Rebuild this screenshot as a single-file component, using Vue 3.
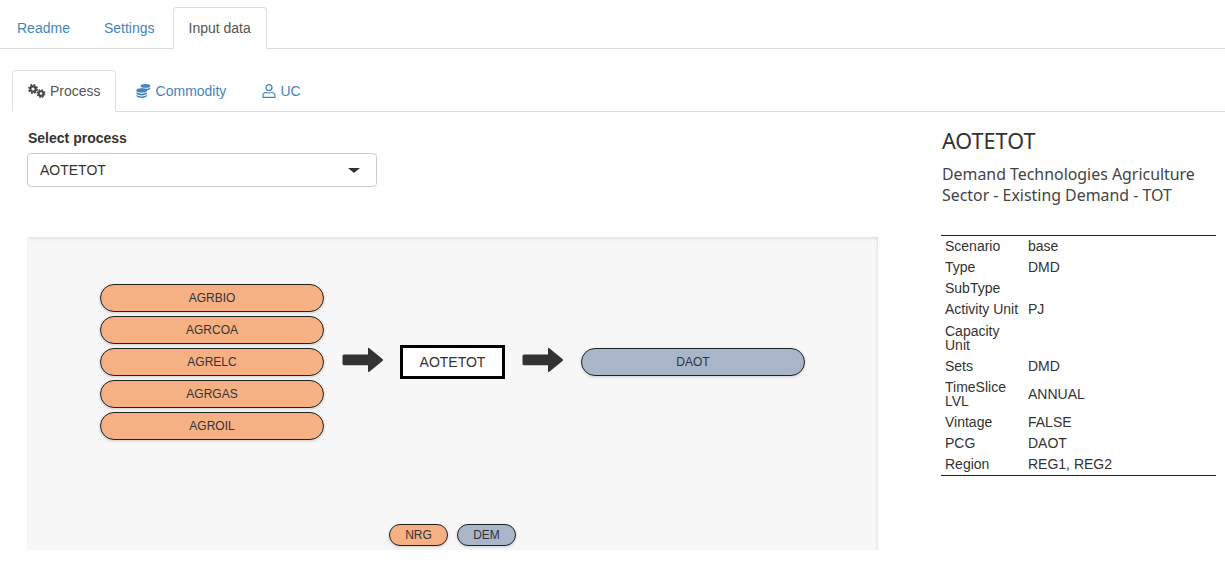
<script setup>
const inputs = ['AGRBIO', 'AGRCOA', 'AGRELC', 'AGRGAS', 'AGROIL']
const rows = [
  ['Scenario', 'base'], ['Type', 'DMD'], ['SubType', ''], ['Activity Unit', 'PJ'],
  ['Capacity Unit', ''], ['Sets', 'DMD'], ['TimeSlice LVL', 'ANNUAL'], ['Vintage', 'FALSE'],
  ['PCG', 'DAOT'], ['Region', 'REG1, REG2']
]
</script>

<template>
  <div class="page">
    <nav class="tabs top">
      <a class="tab">Readme</a>
      <a class="tab">Settings</a>
      <a class="tab active">Input data</a>
    </nav>
    <nav class="tabs sub">
      <a class="tab active">
        <svg class="ico" viewBox="0 0 18 14" width="18" height="14">
          <g fill="none" stroke="#4a4a4a">
            <circle cx="5" cy="5" r="2.700" stroke-width="2.300" />
            <circle cx="5" cy="5" r="4.200" stroke-width="1.600" stroke-dasharray="1.900 1.400" />
            <circle cx="13" cy="9.600" r="2.300" stroke-width="2.100" />
            <circle cx="13" cy="9.600" r="3.700" stroke-width="1.500" stroke-dasharray="1.700 1.200" />
          </g>
        </svg>Process
      </a>
      <a class="tab">
        <svg class="ico coins" viewBox="0 0 15 14" width="15" height="14">
          <g fill="#4285bd">
            <ellipse cx="9.500" cy="1.900" rx="4.800" ry="1.900" />
            <path d="M4.700 3.300c.9 1 2.700 1.500 4.800 1.500s3.900-.5 4.800-1.500v1.200c0 1-1.700 1.800-3.500 1.900-1-1-3-1.600-5-1.700-.7-.3-1.100-.6-1.100-1z" />
            <ellipse cx="5.700" cy="6.400" rx="5.300" ry="2.200" />
            <path d="M.4 8c1 1.100 3 1.700 5.300 1.700S10 9.100 11 8v1.300c0 1.200-2.400 2.200-5.300 2.200S.4 10.500.4 9.300z" />
            <path d="M.4 10.700c1 1.100 3 1.700 5.300 1.700s4.300-.6 5.300-1.700v1.100c0 1.200-2.400 2.200-5.300 2.200S.4 13 .4 11.800z" />
          </g>
        </svg>Commodity
      </a>
      <a class="tab">
        <svg class="ico" viewBox="0 0 14 14" width="14" height="14">
          <g fill="none" stroke="#4285bd" stroke-width="1.200">
            <circle cx="7" cy="3.600" r="3" />
            <path d="M1 13.400v-1.600c0-2 1.500-3.300 3.300-3.300.9 0 1.500.5 2.700.5s1.800-.5 2.700-.5c1.800 0 3.300 1.300 3.300 3.300v1.600z" stroke-linejoin="round" />
          </g>
        </svg>UC
      </a>
    </nav>

    <main class="content">
      <section class="left">
        <label class="field-label">Select process</label>
        <div class="select">
          <span>AOTETOT</span>
          <i class="caret"></i>
        </div>

        <div class="canvas">
          <div class="flow">
            <div class="stack">
              <div v-for="n in inputs" :key="n" class="pill nrg wide">{{ n }}</div>
            </div>
            <svg class="arrow first" viewBox="0 0 42 26" width="42" height="26">
              <path d="M2 7.500h24V1.500q0-1.200 1-.6l13.500 11q1 1 0 2l-13.500 11q-1 .6-1-.6v-6H2q-1.500 0-1.500-1.500V9q0-1.500 1.500-1.500z" fill="#333" />
            </svg>
            <div class="proc">AOTETOT</div>
            <svg class="arrow" viewBox="0 0 42 26" width="42" height="26">
              <path d="M2 7.500h24V1.500q0-1.200 1-.6l13.500 11q1 1 0 2l-13.500 11q-1 .6-1-.6v-6H2q-1.500 0-1.500-1.500V9q0-1.500 1.500-1.500z" fill="#333" />
            </svg>
            <div class="pill dem wide">DAOT</div>
          </div>
          <div class="legend">
            <div class="pill nrg small">NRG</div>
            <div class="pill dem small">DEM</div>
          </div>
        </div>
      </section>

      <aside class="right">
        <h3>AOTETOT</h3>
        <h4>Demand Technologies Agriculture Sector - Existing Demand - TOT</h4>
        <table>
          <tbody>
            <tr v-for="r in rows" :key="r[0]">
              <td class="k">{{ r[0] }}</td>
              <td>{{ r[1] }}</td>
            </tr>
          </tbody>
        </table>
      </aside>
    </main>
  </div>
</template>

<style scoped>
.page {
  width: 1225px;
  height: 570px;
  overflow: hidden;
  background: #fff;
  color: #333;
  font-family: "Liberation Sans", Arial, sans-serif;
  font-size: 14px;
  line-height: 20px;
}
.tabs {
  display: flex;
  gap: 2px;
  border-bottom: 1px solid #ddd;
}
.top {
  padding: 7px 0 0 1px;
}
.sub {
  margin: 21px 0 0 12px;
  gap: 4px;
}
.tab {
  display: block;
  padding: 10px 15px;
  margin-bottom: -1px;
  border: 1px solid transparent;
  border-radius: 4px 4px 0 0;
  color: #4285bd;
  white-space: nowrap;
}
.sub .tab {
  display: flex;
  align-items: center;
}
.sub .tab.active {
  padding-right: 14px;
}
.tab.active {
  color: #555;
  background: #fff;
  border-color: #ddd #ddd #fff;
}
.ico {
  margin-right: 4px;
  flex: none;
}
.ico.coins {
  margin-right: 5px;
}
.content {
  display: flex;
}
.left {
  margin-left: 27px;
  width: 851px;
  padding-top: 16px;
}
.field-label {
  display: block;
  font-weight: 700;
  margin-left: 1px;
  margin-bottom: 5px;
}
.select {
  position: relative;
  width: 350px;
  height: 34px;
  box-sizing: border-box;
  padding: 6px 12px;
  border: 1px solid #ccc;
  border-radius: 4px;
  background: #fff;
}
.caret {
  position: absolute;
  right: 16px;
  top: 14px;
  border-style: solid;
  border-width: 5px 6px 0;
  border-color: #333 transparent transparent;
}
.canvas {
  position: relative;
  margin-top: 50px;
  height: 313px;
  background: #f7f7f7;
  box-shadow: inset 0 4px 4px -3px rgba(0, 0, 0, 0.1), inset -3px 0 3px -2px rgba(0, 0, 0, 0.08);
  font-size: 12px;
}
.flow {
  display: flex;
  align-items: center;
  padding: 47px 0 0 73px;
}
.stack {
  display: flex;
  flex-direction: column;
  gap: 4px;
}
.pill {
  box-sizing: border-box;
  border: 1px solid #222;
  text-align: center;
  box-shadow: 0 1px 3px rgba(0, 0, 0, 0.18);
}
.wide {
  width: 224px;
  height: 28px;
  line-height: 26px;
  border-radius: 14px;
}
.nrg {
  background: #f5b084;
}
.dem {
  background: #a9b6c9;
}
.arrow {
  flex: none;
  margin: 0 17px 4px;
}
.arrow.first {
  margin: 0 16px 4px 18px;
}
.proc {
  box-sizing: border-box;
  width: 105px;
  height: 34px;
  line-height: 28px;
  border: 3px solid #000;
  background: #fff;
  text-align: center;
  font-size: 14px;
}
.legend {
  position: absolute;
  left: 362px;
  top: 287px;
  display: flex;
  gap: 9px;
}
.small {
  width: 59px;
  height: 22px;
  line-height: 20px;
  border-radius: 11px;
}
.right {
  margin-left: 63px;
  width: 275px;
}
h3 {
  margin: 14px 0 0 1px;
  font-family: "Noto Sans", sans-serif;
  font-weight: 400;
  font-size: 21.600px;
  line-height: 30px;
  color: #333;
}
h4 {
  margin: 8px 0 0 1px;
  font-family: "Noto Sans", sans-serif;
  font-weight: 400;
  font-size: 15.900px;
  line-height: 20.500px;
  color: #444;
}
table {
  width: 275px;
  margin-top: 30px;
  border-collapse: collapse;
  border-top: 1px solid #222;
  border-bottom: 1px solid #222;
  line-height: 14px;
  table-layout: fixed;
}
td {
  padding: 3.600px 0 3.600px 4px;
  vertical-align: middle;
}
tr:first-child td {
  padding-top: 2.800px;
}
.k {
  width: 79px;
}
</style>
